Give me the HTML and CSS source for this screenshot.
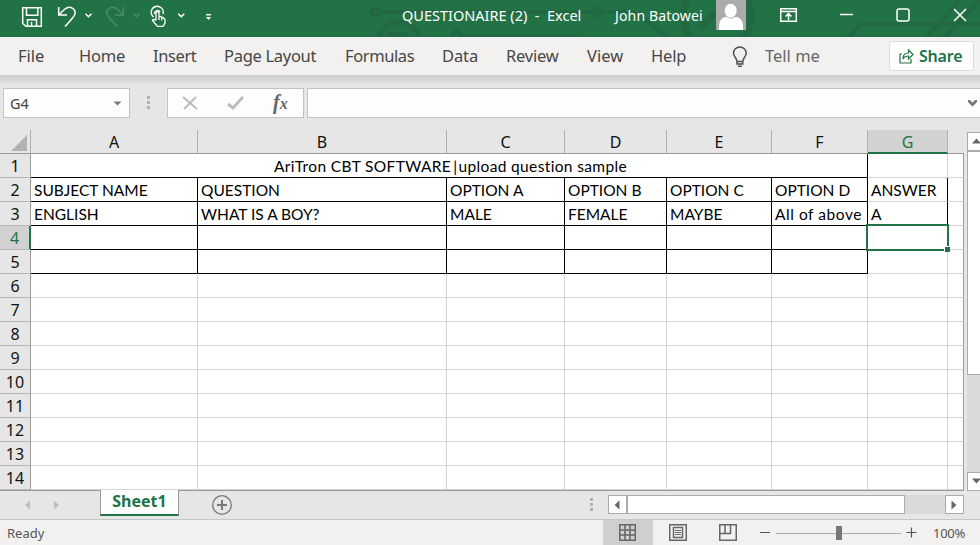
FILE: index.html
```html
<!DOCTYPE html>
<html lang="en">
<head>
<meta charset="utf-8">
<title>QUESTIONAIRE (2) - Excel</title>
<link rel="stylesheet" href="styles.css">
</head>
<body>
<div class="app">
  <header class="titlebar">
    <svg class="circuit" width="980" height="37" viewBox="0 0 980 37" fill="none" stroke="#226842" stroke-width="4">
      <circle cx="375.500" cy="12" r="4"/><path d="M380 12H592"/><circle cx="597" cy="12" r="4"/><path d="M602 12H634L668 38" />
      <circle cx="399" cy="43" r="21" stroke-width="5"/><path d="M387 34.500H408" stroke-width="5"/>
      <circle cx="457" cy="35" r="4"/><path d="M462 36H582"/>
      <circle cx="717" cy="16" r="34" stroke-width="7"/><path d="M700 28L716 12" stroke-width="7"/>
      <path d="M848 38L860 24H980M926 38L960 0M944 38L980 0"/>
    </svg>
    <svg class="quick" width="230" height="37" viewBox="0 0 230 37" fill="none" stroke="#fff" stroke-width="1.500">
      <path d="M22.700 7.700H41.300V26.300H26L22.700 23.500ZM26.500 7.700V15.300H37.800V7.700M27.500 26V19.700H36.500V26M31.500 22V26"/>
      <path d="M58.700 7V15H67M59 14.500L65 9C70 5 76 9 75 14C74.500 16 73 18 65 26.500"/>
      <path d="M85.500 13.700L88.500 16.700L91.500 13.700M178.300 13.700L181.300 16.700L184.300 13.700"/>
      <g stroke="#4b8c68"><path d="M123.300 7V15H115M123 14.500L117 9C112 5 106 9 107 14C107.500 16 109 18 117 26.500M133.500 13.700L136.500 16.700L139.500 13.700"/></g>
      <path d="M153.500 17A6 6 0 1 1 163 14M154.500 14V13A3 3 0 0 1 160 12"/>
      <path fill="#217346" stroke-width="1.300" d="M156 20V12.500Q157.500 10.500 159 12.500V17Q160.500 15.500 161.500 17.500Q163 16.500 163.500 18.500Q165 18 165 20V23L163 26.300H157.500L152.500 20.500Q153 18.500 156 20.500M159 17V20M161.700 17.500V20.500"/>
      <path d="M206 14.700H211"/><path d="M205.800 17H211.200L208.500 20Z" fill="#fff" stroke="none"/>
    </svg>
    <span class="doc">QUESTIONAIRE (2)&nbsp; -&nbsp; Excel</span>
    <span class="user">John Batowei</span>
    <svg class="avatar" width="30" height="30" viewBox="0 0 30 30"><path fill="#ababab" d="M0 0H30V30H0z"/><ellipse cx="14.700" cy="10.700" rx="6" ry="7" fill="#fff"/><path fill="#fff" d="M3 30V25Q4 18 9 17L11 17Q15 20 19 17H21Q26 18 27 25V30Z"/></svg>
    <svg class="window-buttons" width="200" height="30" viewBox="0 0 200 30" fill="none" stroke="#fff" stroke-width="1.500">
      <path d="M.7 8.700H16.300V21.300H.7ZM1 11.500H16M8.500 20V14M5.500 16.500L8.500 13.500L11.500 16.500"/>
      <path d="M60 14.500H73"/><rect x="117" y="9" width="12" height="12" rx="2"/><path d="M174 9L186 21M186 9L174 21"/>
    </svg>
  </header>
  <nav class="tabs">
    <span class="t-file">File</span><span class="t-home">Home</span><span class="t-insert">Insert</span><span class="t-layout">Page Layout</span><span class="t-formulas">Formulas</span><span class="t-data">Data</span><span class="t-review">Review</span><span class="t-view">View</span><span class="t-help">Help</span>
    <svg class="bulb" width="16" height="22" viewBox="0 0 16 22" fill="none" stroke="#505050" stroke-width="1.500"><path d="M5 15.500C5 12 1.500 11 1.500 7.300A6.300 6.300 0 0 1 14.200 7.300C14.200 11 10.800 12 10.800 15.500ZM5 15V18H10.800V15M6 20.200H9.800"/></svg>
    <span class="t-tell">Tell me</span>
    <button class="share"><svg width="15" height="16" viewBox="0 0 15 16" fill="none" stroke="#217346" stroke-width="1.200"><path d="M3 6H1V15H12V11M4 11C4 7 6 5 9.500 5V2L14 6.500L9.500 11V8C7 8 5 9 4 11Z"/></svg><span>Share</span></button>
  </nav>
  <div class="formula">
    <div class="namebox"><span>G4</span><svg width="9" height="5" viewBox="0 0 9 5"><path d="M.5 .5H8.500L4.500 4.500Z" fill="#777"/></svg></div>
    <div class="dots"><i></i><i></i><i></i></div>
    <div class="fx">
      <svg width="60" height="28" viewBox="0 0 60 28" fill="none" stroke="#bcbcbc"><path stroke-width="2" d="M1 8L15 20M14 8L2 20"/><path stroke-width="3" d="M46 15L51 19L61 8"/></svg>
      <em>f<small>x</small></em>
    </div>
    <div class="input"><svg width="9" height="7" viewBox="0 0 9 7"><path d="M0 0H2L4.500 2.500L7 0H9V2L4.500 6.500L0 2Z" fill="#777"/></svg></div>
  </div>
  <main class="work">
    <table class="sheet">
      <colgroup><col class="c0"><col class="ca"><col class="cb"><col class="cc"><col class="cd"><col class="ce"><col class="cf"><col class="cg"><col class="ch"></colgroup>
      <thead><tr><th class="corner"><svg width="16" height="16" viewBox="0 0 16 16"><path d="M16 0V16H0Z" fill="#b2b2b2"/></svg></th><th>A</th><th>B</th><th>C</th><th>D</th><th>E</th><th>F</th><th class="active">G</th><th class="last"></th></tr></thead>
      <tbody>
        <tr class="framed"><th>1</th><td colspan="6" class="merged">AriTron CBT SOFTWARE<span class="bar">|</span>upload question sample</td><td></td><td></td></tr>
        <tr class="framed"><th>2</th><td>SUBJECT NAME</td><td>QUESTION</td><td>OPTION A</td><td>OPTION B</td><td>OPTION C</td><td>OPTION D</td><td class="answer">ANSWER</td><td></td></tr>
        <tr class="framed"><th>3</th><td>ENGLISH</td><td>WHAT IS A BOY?</td><td>MALE</td><td>FEMALE</td><td>MAYBE</td><td class="above">All of above</td><td class="answer">A</td><td></td></tr>
        <tr class="framed"><th class="active">4</th><td></td><td></td><td></td><td></td><td></td><td></td><td class="selected"><div class="selection"><i></i></div></td><td></td></tr>
        <tr class="framed"><th>5</th><td></td><td></td><td></td><td></td><td></td><td></td><td></td><td></td></tr>
        <tr><th>6</th><td></td><td></td><td></td><td></td><td></td><td></td><td></td><td></td></tr>
        <tr><th>7</th><td></td><td></td><td></td><td></td><td></td><td></td><td></td><td></td></tr>
        <tr><th>8</th><td></td><td></td><td></td><td></td><td></td><td></td><td></td><td></td></tr>
        <tr><th>9</th><td></td><td></td><td></td><td></td><td></td><td></td><td></td><td></td></tr>
        <tr><th>10</th><td></td><td></td><td></td><td></td><td></td><td></td><td></td><td></td></tr>
        <tr><th>11</th><td></td><td></td><td></td><td></td><td></td><td></td><td></td><td></td></tr>
        <tr><th>12</th><td></td><td></td><td></td><td></td><td></td><td></td><td></td><td></td></tr>
        <tr><th>13</th><td></td><td></td><td></td><td></td><td></td><td></td><td></td><td></td></tr>
        <tr><th>14</th><td></td><td></td><td></td><td></td><td></td><td></td><td></td><td></td></tr>
      </tbody>
    </table>
    <div class="vscroll">
      <div class="vbtn"><svg width="9" height="6" viewBox="0 0 9 6"><path d="M4.500 .5L9 5.500H0Z" fill="#666"/></svg></div>
      <div class="vthumb"></div><div class="vtrack"></div>
      <div class="vbtn"><svg width="9" height="6" viewBox="0 0 9 6"><path d="M4.500 5.500L9 .5H0Z" fill="#666"/></svg></div>
    </div>
  </main>
  <div class="sheetbar">
    <svg class="arrows" width="60" height="28" viewBox="0 0 60 28" fill="#bdbdbd"><path d="M30 9.500V18.500L25 14ZM54 9.500V18.500L59 14Z"/></svg>
    <div class="sheet-tab">Sheet1</div>
    <svg class="add" width="20" height="20" viewBox="0 0 20 20" fill="none" stroke="#777"><circle cx="10" cy="10" r="9.300" stroke-width="1.300"/><path stroke-width="2" d="M5 10H15M10 5V15"/></svg>
    <div class="dots"><i></i><i></i><i></i></div>
    <div class="hscroll">
      <div class="hbtn"><svg width="6" height="10" viewBox="0 0 6 10"><path d="M5.500 .5V9.500L.5 5Z" fill="#666"/></svg></div><div class="hthumb"></div><div class="htrack"></div><div class="hbtn"><svg width="6" height="10" viewBox="0 0 6 10"><path d="M.5 .5V9.500L5.500 5Z" fill="#666"/></svg></div>
    </div>
  </div>
  <footer class="status">
    <span class="ready">Ready</span>
    <div class="view on"><svg width="17" height="17" viewBox="0 0 17 17" fill="none" stroke="#666"><path stroke-width="1.500" d="M.75 .75H16.250V16.250H.75ZM6 1V16M11 1V16M1 6H16M1 11H16"/></svg></div>
    <div class="view"><svg width="18" height="17" viewBox="0 0 18 17" fill="none" stroke="#666"><path stroke-width="1.500" d="M.75 .75H17.250V16.250H.75ZM4.500 3.500H13.500V13.500H4.500Z"/><path d="M6 6.500H12M6 8.500H12M6 10.500H12"/></svg></div>
    <div class="view"><svg width="18" height="17" viewBox="0 0 18 17" fill="none" stroke="#666"><path stroke-width="1.500" d="M.75 .75H17.250V16.250H.75ZM1 9.500H11.500V1M6 1V9"/></svg></div>
    <svg class="zoom" width="160" height="25" viewBox="0 0 160 25" fill="none"><path stroke="#555" stroke-width="1.200" d="M2 12.500H12M148.500 12.500H158.500M153.500 7.500V17.500"/><path stroke="#aaa" d="M18 13.500H143"/><path fill="#777" d="M78 6H84V20H78z"/></svg>
    <span class="pct">100%</span>
  </footer>
</div>
</body>
</html>
```
FILE: styles.css
```css
* { box-sizing: border-box; }
body { margin: 0; overflow: hidden; font-family: "Noto Sans", sans-serif; }
svg { display: block; flex: none; }
.app { width: 980px; height: 545px; display: flex; flex-direction: column; background: #e6e6e6; }
.titlebar { height: 37px; flex: none; background: #217346; position: relative; display: flex; color: #fff; }
.circuit { position: absolute; left: 0; top: 0; }
.quick, .doc, .user, .avatar, .window-buttons { position: relative; flex: none; }
.doc { width: 213px; margin-left: 172px; font-size: 14.5px; line-height: 30px; white-space: nowrap; }
.user { width: 101px; font-size: 14px; line-height: 31px; letter-spacing: .15px; white-space: nowrap; }
.window-buttons { margin-left: 34px; }

.tabs { height: 38px; flex: none; background: #f3f1ef; display: flex; color: #464646; font-size: 16.5px; line-height: 38px; white-space: nowrap; padding-left: 18px; }
.tabs > span { flex: none; }
.t-file { width: 61px; }
.t-home { width: 74px; letter-spacing: -.2px; }
.t-insert { width: 71px; letter-spacing: -.4px; }
.t-layout { width: 121px; letter-spacing: -.3px; }
.t-formulas { width: 97px; letter-spacing: -.4px; }
.t-data { width: 64px; letter-spacing: -.1px; }
.t-review { width: 81px; letter-spacing: -.2px; }
.t-view { width: 64px; }
.t-help { width: 81px; letter-spacing: -.2px; }
.bulb { margin-top: 9px; }
.t-tell { width: 124px; margin-left: 17px; color: #666; }
.share { width: 85px; height: 30px; margin-top: 4px; flex: none; background: #fff; border: 1px solid #dedcda; border-radius: 3px; display: flex; align-items: center; gap: 5px; padding: 0 0 0 9px; font: 600 16px "Noto Sans", sans-serif; letter-spacing: -.2px; color: #217346; }

.formula { height: 55px; flex: none; display: flex; padding: 13px 0 0 3px; background: linear-gradient(#cacaca, #e6e6e6 10px); }
.namebox { width: 127px; height: 30px; background: #fdfdfd; border: 1px solid #c3c3c3; display: flex; align-items: center; justify-content: space-between; padding: 0 7px 0 6px; font-size: 14.5px; color: #444; }
.dots { width: 3px; display: flex; flex-direction: column; gap: 2px; flex: none; }
.dots i { width: 3px; height: 3px; background: #b0b0b0; }
.formula .dots { margin: 8px 17px 0 17px; }
.fx { width: 137px; height: 30px; background: #fdfdfd; border: 1px solid #c3c3c3; display: flex; padding-left: 14px; }
.fx svg { overflow: visible; }
.fx em { margin-left: 31px; font: italic bold 20px/26px "Liberation Serif", serif; color: #666; }
.fx small { font-size: 16px; }
.input { flex: 1; height: 30px; margin-left: 3px; background: #fdfdfd; border: 1px solid #c3c3c3; border-right: 0; display: flex; align-items: center; justify-content: flex-end; padding-right: 3px; }

.work { height: 361px; flex: none; display: flex; }
.sheet { width: 964px; height: 361px; flex: none; table-layout: fixed; border-collapse: separate; border-spacing: 0; border-bottom: 1px solid #999; }
.c0 { width: 31px; }
.ca { width: 167px; }
.cb { width: 249px; }
.cc { width: 118px; }
.cd { width: 102px; }
.ce { width: 105px; }
.cf { width: 96px; }
.cg { width: 80px; }
.ch { width: 16px; }
th, td { padding: 0; height: 24px; overflow: visible; white-space: nowrap; }
th { font-weight: 400; font-size: 16px; line-height: 22px; color: #111; background: #e6e6e6; border-right: 1px solid #b0b0b0; text-align: center; }
thead th { border-bottom: 1px solid #999; line-height: 22px; }
tbody th { padding-top: 1px; border-right-color: #999; border-bottom: 1px solid #b8b8b8; }
.corner svg { margin: 3px 0 0 11px; }
thead .last { border-right: 0; }
thead .active { background: #d2d2d2; color: #217346; border-bottom: 2px solid #217346; padding-top: 2px; line-height: 20px; }
tbody .active { background: #d2d2d2; color: #217346; border-right: 2px solid #217346; }
td { background: #fff; border-right: 1px solid #d4d4d4; border-bottom: 1px solid #d4d4d4; font: 15.5px/22px Lato, sans-serif; font-variant-ligatures: none; color: #000; padding: 1px 0 0 3px; }
td:last-child { border-right-color: #999; }
.framed td:nth-last-child(n+3) { border-color: #000; }
.framed .merged { text-align: center; letter-spacing: .36px; }
.bar { margin: 0 1px 0 2px; }
.above { letter-spacing: .55px; }
.framed .answer { border-right-color: #000; }
.selected { position: relative; }
.selection { position: absolute; left: -2px; top: -2px; width: 83px; height: 27px; border: 2px solid #217346; }
.selection i { position: absolute; right: -3px; bottom: -3px; width: 6px; height: 6px; background: #217346; border: solid #fff; border-width: 1px 0 0 1px; }
.vscroll { width: 13px; margin-left: 3px; padding-top: 2px; display: flex; flex-direction: column; }
.vbtn { height: 19px; flex: none; background: #fff; border: 1px solid #ababab; border-right: 0; padding: 5px 0 0 4px; }
.vthumb { height: 224px; background: #fff; border: 1px solid #ababab; border-right: 0; }
.vtrack { flex: 1; background: #dadada; }

.sheetbar { height: 29px; flex: none; display: flex; border-bottom: 1px solid #c6c6c6; }
.sheet-tab { width: 79px; height: 26px; margin: -1px 0 0 40px; background: #fff; border: solid #999; border-width: 0 1px; border-bottom: 2px solid #217346; color: #217346; font-size: 16px; font-weight: 700; line-height: 23px; text-align: center; }
.add { margin: 4px 0 0 33px; }
.sheetbar .dots { margin: 7px 0 0 358px; }
.hscroll { width: 356px; height: 19px; margin: 4px 0 0 15px; display: flex; background: #dadada; }
.hbtn { width: 19px; border: 1px solid #ababab; background: #fff; padding: 4px 0 0 5px; }
.hthumb { width: 278px; border: 1px solid #ababab; background: #fff; }
.htrack { flex: 1; }
.status { height: 25px; flex: none; background: #f3f1ef; display: flex; color: #555; font-size: 13px; line-height: 27px; }
.ready { width: 596px; margin-left: 7px; }
.view { width: 50px; height: 25px; padding: 4px 0 0 16px; }
.view.on { background: #d0cfcd; }
.zoom { margin-left: 5px; }
.pct { margin-left: 15px; letter-spacing: -.3px; }
```
